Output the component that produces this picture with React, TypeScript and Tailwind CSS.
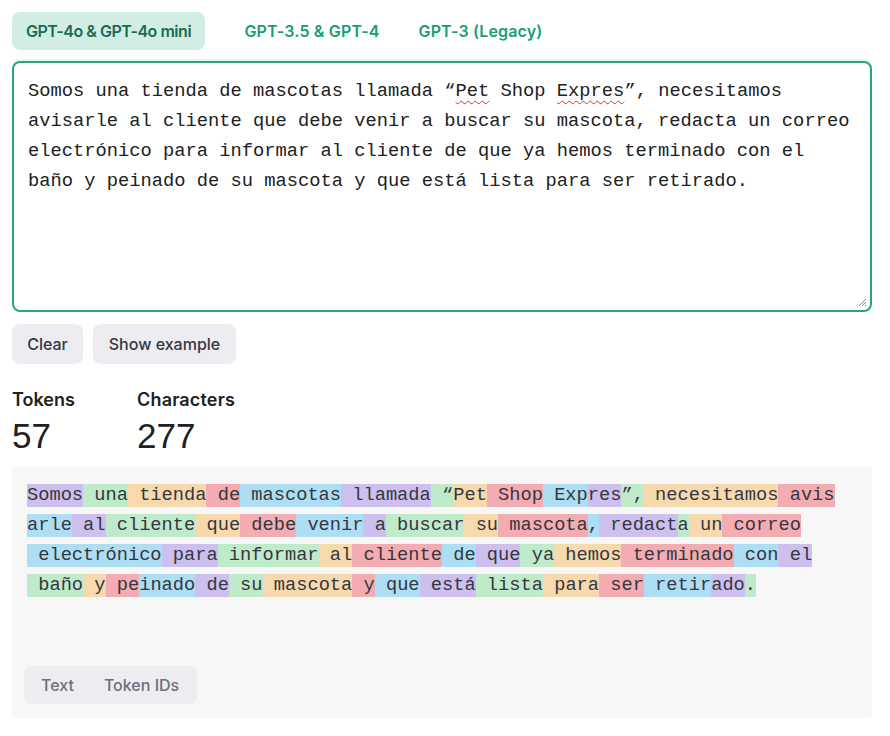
const tokens: string[] = [
  "Somos", " una", " tienda", " de", " mascotas", " llamada", " “", "Pet", " Shop", " Exp", "res", "”,", " necesitamos", " avis",
  "arle", " al", " cliente", " que", " debe", " venir", " a", " buscar", " su", " mascota", ",", " redact", "a", " un", " correo",
  " electrónico", " para", " informar", " al", " cliente", " de", " que", " ya", " hemos", " terminado", " con", " el",
  " baño", " y", " pe", "inado", " de", " su", " mascota", " y", " que", " está", " lista", " para", " ser", " retir", "ado", ".",
];

// colour cycle used by the tokenizer view
const tokenColors = ["bg-[#cdbfee]", "bg-[#c0ebcb]", "bg-[#f6d9ad]", "bg-[#f3acb1]", "bg-[#aedef4]"];

export default function App() {
  return (
    <div className="min-h-screen w-full bg-white p-3 font-['Inter',sans-serif] text-[#202123]">
      <div className="w-[860px]">
        {/* Model tabs */}
        <div className="flex items-center">
          <button className="h-[38px] w-[193px] rounded-lg bg-[#d2ede4] text-[16px] font-semibold tracking-[-0.03em] text-[#1a6b55]">
            GPT-4o & GPT-4o mini
          </button>
          <button className="ml-[25px] h-[38px] w-[164px] rounded-lg text-[16px] font-semibold tracking-[0.01em] text-[#1a9c78]">
            GPT-3.5 & GPT-4
          </button>
          <button className="ml-[10px] h-[38px] w-[153px] rounded-lg text-[16px] font-semibold tracking-[0.01em] text-[#1a9c78]">
            GPT-3 (Legacy)
          </button>
        </div>

        {/* Prompt input */}
        <div className="relative mt-[11px] h-[251px] rounded-lg border-2 border-[#2ba57f] px-[14px] py-[13px] font-['Liberation_Mono',monospace] text-[18.75px] leading-[30px] text-[#202123] shadow-[0_-2px_0_0_rgba(42,165,127,0.12)]">
          Somos una tienda de mascotas llamada “<span className="underline decoration-wavy decoration-[#e03030] decoration-1 underline-offset-[4px]">Pet</span> Shop <span className="underline decoration-wavy decoration-[#e03030] decoration-1 underline-offset-[4px]">Expres</span>”, necesitamos avisarle al cliente que debe venir a buscar su mascota, redacta un correo electrónico para informar al
          cliente de que ya hemos terminado con el baño y peinado de su mascota y que está lista para ser retirado.
          <svg className="absolute bottom-[3px] right-[3px]" width="9" height="9" viewBox="0 0 9 9">
            <path d="M1 8L8 1M4 8L8 4M7 8L8 7" stroke="#8a8a8a" strokeWidth="1" />
          </svg>
        </div>

        {/* Actions */}
        <div className="mt-3 flex gap-2.5">
          <button className="h-10 w-[71px] rounded-lg bg-[#ececf1] text-[16px] font-medium text-[#353740]">
            Clear
          </button>
          <button className="h-10 w-[143px] rounded-lg bg-[#ececf1] text-[16px] font-medium text-[#353740]">
            Show example
          </button>
        </div>

        {/* Stats */}
        <div className="mt-[25px] flex">
          <div className="w-[125px]">
            <div className="text-[18px] font-semibold leading-[22px]">Tokens</div>
            <div className="mt-[6px] font-['Liberation_Sans',sans-serif] text-[35px] leading-[38px] text-[#202123]">57</div>
          </div>
          <div>
            <div className="text-[18px] font-semibold leading-[22px] tracking-[0.01em]">Characters</div>
            <div className="mt-[6px] font-['Liberation_Sans',sans-serif] text-[35px] leading-[38px] text-[#202123]">277</div>
          </div>
        </div>

        {/* Tokenized output */}
        <div className="mt-[12px] flex h-[251px] flex-col rounded-[3px] bg-[#f7f7f8] px-[15px] pb-[14px] pt-[13px]">
          <div className="w-[830px] font-['Liberation_Mono',monospace] text-[18.7px] leading-[30px] text-[#353740]">
            {tokens.map((t, i) => (
              <span key={i} className={`my-[3.5px] inline-block whitespace-pre align-top leading-[23px] ${tokenColors[i % 5]}`}>
                {t}
              </span>
            ))}
          </div>
          <div className="mt-auto flex">
            <div className="ml-[-3px] flex h-[38px] w-[173px] items-center rounded-lg bg-[#ececf1] px-[17px] text-[16px] font-medium text-[#6e6e80]">
              <span>Text</span>
              <span className="ml-[30px]">Token IDs</span>
            </div>
          </div>
        </div>
      </div>
    </div>
  );
}
